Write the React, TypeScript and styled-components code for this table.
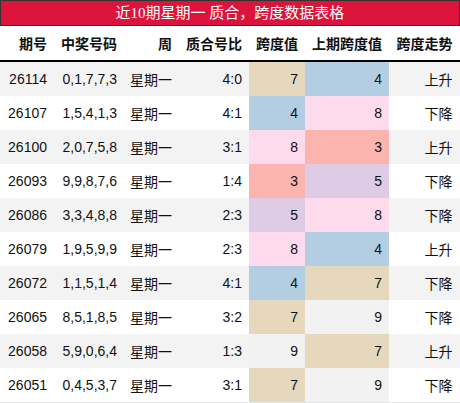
import React from "react";
import styled, { createGlobalStyle } from "styled-components";

const GlobalStyle = createGlobalStyle`
    body {
        margin: 0;
        background: #ffffff;
    }
`;

const Wrapper = styled.div`
    width: 460px;
    font-family: "Liberation Sans", "Noto Sans CJK SC", sans-serif;
    color: #111;
`;

const Title = styled.div`
    height: 24px;
    line-height: 24px;
    background: #dc143c;
    border: 1px solid #333;
    color: #ffffff;
    text-align: center;
    font-family: "Liberation Serif", "Noto Sans CJK SC", serif;
    font-size: 15px;
`;

const Table = styled.table`
    width: 460px;
    border-collapse: collapse;
    table-layout: fixed;
    border-right: 1px solid #e6e6e6;
    border-bottom: 1px solid #e6e6e6;
`;

const HeadCell = styled.th`
    height: 34px;
    padding: 0 7px 0 0;
    text-align: right;
    font-size: 14px;
    font-weight: bold;
    border-bottom: 2px solid #000;
`;

const Row = styled.tr<{ $odd: boolean }>`
    background: ${(p) => (p.$odd ? "#f3f3f3" : "#ffffff")};
`;

const Cell = styled.td<{ $bg?: string }>`
    height: 34px;
    padding: 0 7px 0 0;
    text-align: right;
    font-size: 14px;
    background: ${(p) => p.$bg || "transparent"};
`;

const spanColors: Record<number, string> = {
    3: "#fbb4ae",
    4: "#b3cde3",
    5: "#decbe4",
    7: "#e5d8bd",
    8: "#fddaec",
    9: "#f2f2f2",
};

const rows = [
    ["26114", "0,1,7,7,3", "4:0", 7, 4, "上升"],
    ["26107", "1,5,4,1,3", "4:1", 4, 8, "下降"],
    ["26100", "2,0,7,5,8", "3:1", 8, 3, "上升"],
    ["26093", "9,9,8,7,6", "1:4", 3, 5, "下降"],
    ["26086", "3,3,4,8,8", "2:3", 5, 8, "下降"],
    ["26079", "1,9,5,9,9", "2:3", 8, 4, "上升"],
    ["26072", "1,1,5,1,4", "4:1", 4, 7, "下降"],
    ["26065", "8,5,1,8,5", "3:2", 7, 9, "下降"],
    ["26058", "5,9,0,6,4", "1:3", 9, 7, "上升"],
    ["26051", "0,4,5,3,7", "3:1", 7, 9, "下降"],
] as const;

const widths = [54, 70, 55, 70, 56, 84, 71];
const headers = ["期号", "中奖号码", "周", "质合号比", "跨度值", "上期跨度值", "跨度走势"];

const App = () => {
    return (
        <Wrapper>
            <GlobalStyle />
            <Title>近10期星期一 质合，跨度数据表格</Title>
            <Table>
                <colgroup>
                    {widths.map((w, i) => (
                        <col key={i} style={{ width: w }} />
                    ))}
                </colgroup>
                <thead>
                    <tr>
                        {headers.map((h) => (
                            <HeadCell key={h}>{h}</HeadCell>
                        ))}
                    </tr>
                </thead>
                <tbody>
                    {rows.map((r, i) => (
                        <Row key={r[0]} $odd={i % 2 === 0}>
                            <Cell>{r[0]}</Cell>
                            <Cell>{r[1]}</Cell>
                            <Cell>星期一</Cell>
                            <Cell>{r[2]}</Cell>
                            <Cell $bg={spanColors[r[3]]}>{r[3]}</Cell>
                            <Cell $bg={spanColors[r[4]]}>{r[4]}</Cell>
                            <Cell>{r[5]}</Cell>
                        </Row>
                    ))}
                </tbody>
            </Table>
        </Wrapper>
    );
};

export default App;
